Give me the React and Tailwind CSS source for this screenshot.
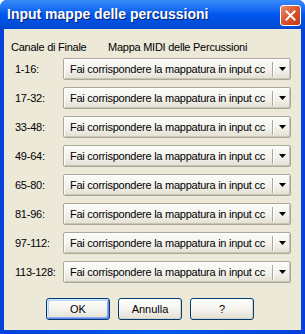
import React from "react";

const rows = ["1-16:", "17-32:", "33-48:", "49-64:", "65-80:", "81-96:", "97-112:", "113-128:"];

function Combo() {
  return (
    <div className="relative flex h-[22px] w-[228px] items-center rounded-[2px] border border-[#aca899] bg-gradient-to-b from-[#fbfbf8] via-[#f4f3ee] to-[#e3e0d2] shadow-[inset_1px_1px_0_#ffffff,inset_-1px_-1px_0_#c9c5b5]">
      <div className="flex-1 overflow-hidden whitespace-nowrap pl-[6px] text-[11px] leading-[13px] tracking-[-0.25px] text-black">
        Fai corrispondere la mappatura in input cc
      </div>
      <div className="h-[15px] w-px bg-[#aca899]" />
      <div className="h-[15px] w-px bg-white" />
      <div className="flex w-[16px] items-center justify-center">
        <svg width="7" height="4" viewBox="0 0 7 4">
          <polygon points="0,0 7,0 3.5,4" fill="#000" />
        </svg>
      </div>
    </div>
  );
}

function Btn({ children, def }) {
  return (
    <div
      className={
        "flex h-[22px] w-[64px] items-center justify-center rounded-[3px] border border-[#003c74] bg-gradient-to-b from-white via-[#f4f3ee] to-[#e3e0d3] text-[11px] text-black " +
        (def
          ? "shadow-[inset_1px_1px_0_#cee7ff,inset_-1px_-1px_0_#6982ee,inset_2px_2px_0_#bcd4f6,inset_-2px_-2px_0_#89adec]"
          : "shadow-[inset_-1px_-1px_0_#d6d0c5]")
      }
    >
      {children}
    </div>
  );
}

export default function App() {
  return (
    <div
      className="flex h-[334px] w-[305px] flex-col overflow-hidden rounded-t-[7px] bg-[#0054e3]"
      style={{ fontFamily: '"Liberation Sans", Arial, sans-serif' }}
    >
      <div className="relative flex h-[29px] items-center bg-gradient-to-b from-[#3a8cf9] via-[#0058ee] to-[#0049d0] pl-[7px]">
        <span className="text-[14px] font-bold text-white [text-shadow:1px_1px_0_#0a1f6e]">
          Input mappe delle percussioni
        </span>
        <div className="absolute right-[4px] top-[5px] flex h-[21px] w-[21px] items-center justify-center rounded-[3px] border border-white bg-gradient-to-br from-[#e98a6a] via-[#d9532b] to-[#c13a16]">
          <svg width="11" height="11" viewBox="0 0 11 11">
            <path d="M1.5 1.5 L9.5 9.5 M9.5 1.5 L1.5 9.5" stroke="#fff" strokeWidth="2" strokeLinecap="square" />
          </svg>
        </div>
      </div>
      <div className="flex flex-1 px-[4px] pb-[4px] bg-gradient-to-r from-[#0841d9] via-[#0058ee] to-[#0841d9]">
        <div className="flex flex-1 flex-col bg-[#ece9d8] text-[11px] tracking-[-0.25px] text-black">
          <div className="flex pl-[7px] pt-[12px] leading-[13px]">
            <span className="w-[97px]">Canale di Finale</span>
            <span>Mappa MIDI delle Percussioni</span>
          </div>
          <div className="mt-[4px] flex flex-col gap-[7px]">
            {rows.map((r) => (
              <div key={r} className="flex items-center">
                <span className="w-[59px] pl-[11px]">{r}</span>
                <Combo />
              </div>
            ))}
          </div>
          <div className="mt-[15px] flex gap-[8px] pl-[42px] tracking-normal">
            <Btn def>OK</Btn>
            <Btn>Annulla</Btn>
            <Btn>?</Btn>
          </div>
        </div>
      </div>
    </div>
  );
}
